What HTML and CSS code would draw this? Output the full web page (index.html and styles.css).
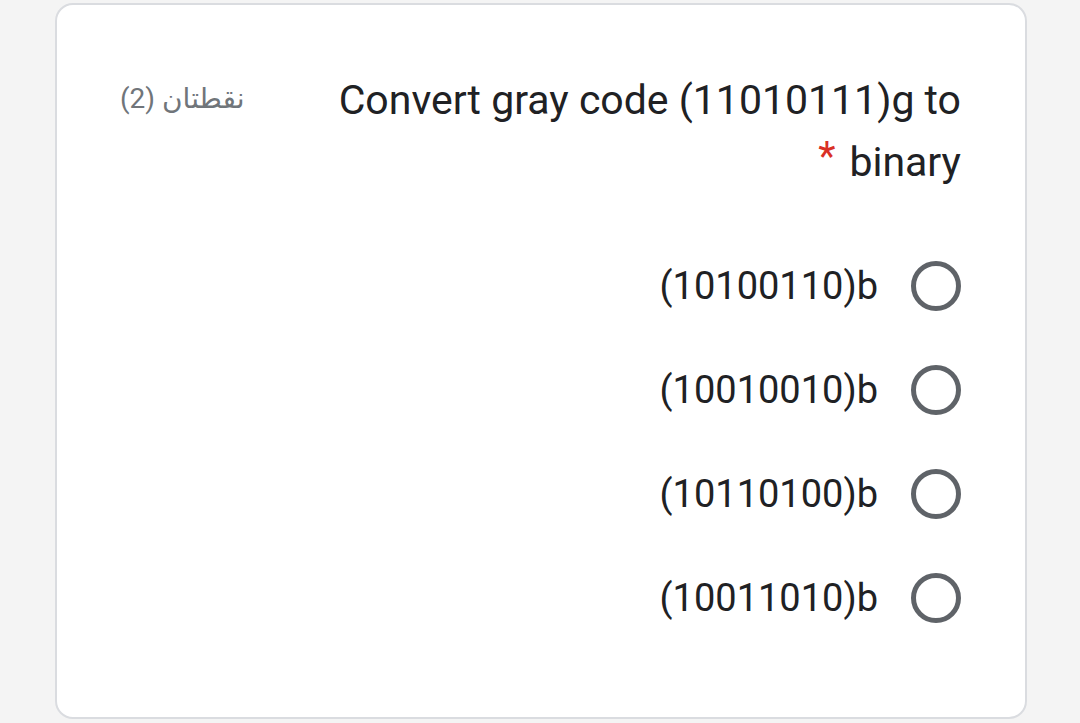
FILE: index.html
```html
<!DOCTYPE html>
<html lang="ar" dir="rtl">
<head>
<meta charset="utf-8">
<link rel="stylesheet" href="styles.css">
</head>
<body>
<div class="card">
  <div class="header">
    <div class="title">Convert gray code (11010111)g to binary<span class="req">*</span></div>
    <div class="points">نقطتان (2)</div>
  </div>
  <div class="options">
    <label class="option"><span class="radio"></span><span class="opt-text">(10100110)b</span></label>
    <label class="option"><span class="radio"></span><span class="opt-text">(10010010)b</span></label>
    <label class="option"><span class="radio"></span><span class="opt-text">(10110100)b</span></label>
    <label class="option"><span class="radio"></span><span class="opt-text">(10011010)b</span></label>
  </div>
</div>
</body>
</html>
```
FILE: styles.css
```css
html, body {
  margin: 0;
  padding: 0;
  background: #f4f4f4;
}
body {
  padding: 3px 53px 4px 55px;
  font-family: Roboto, "DejaVu Sans", sans-serif;
  color: #202124;
}
.card {
  box-sizing: border-box;
  height: 716px;
  background: #ffffff;
  border: 2px solid #dadce0;
  border-radius: 18px;
  padding: 64px 64px 0 63px;
}
.header {
  display: flex;
  align-items: flex-start;
  gap: 30px;
}
.title {
  flex: 1;
  font-size: 41px;
  line-height: 62px;
  text-align: right;
}
.req {
  color: #d93025;
  margin-right: 14px;
  font-size: 40px;
  line-height: 40px;
  vertical-align: 6px;
}
.points {
  font-size: 28px;
  line-height: 62px;
  color: #70757a;
  white-space: nowrap;
  margin-top: -1px;
}
.options {
  margin-top: 68px;
  display: flex;
  flex-direction: column;
  gap: 54px;
}
.option {
  display: flex;
  align-items: center;
  gap: 33px;
  height: 50px;
}
.radio {
  box-sizing: border-box;
  width: 50px;
  height: 50px;
  border: 5px solid #5f6368;
  border-radius: 50%;
  flex: none;
}
.opt-text {
  direction: ltr;
  font-size: 38px;
  line-height: 50px;
}
```
